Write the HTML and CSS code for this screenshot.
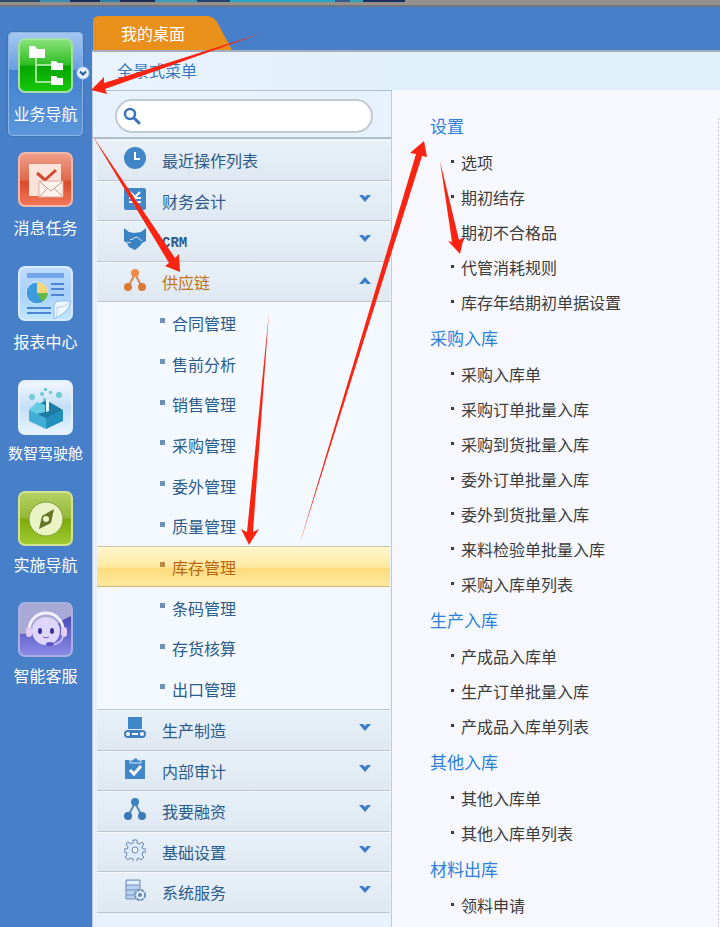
FILE: index.html
```html
<!DOCTYPE html>
<html lang="zh-CN">
<head>
	<meta charset="utf-8">
	<title>我的桌面</title>
	<link rel="stylesheet" href="styles.css">
</head>
<body>
<div class="top-strip"></div>
<div class="app">
  <nav class="sidebar">
    <button class="side-btn active">
      <svg class="side-icon" viewBox="0 0 55 55">
        <defs>
          <linearGradient id="green" x2="0" y2="1"><stop offset="0" stop-color="#8be37d"/><stop offset=".48" stop-color="#2fbd24"/><stop offset=".52" stop-color="#06a400"/><stop offset="1" stop-color="#18c80c"/></linearGradient>
        </defs>
        <rect x="1" y="1" width="53" height="53" rx="6" fill="url(#green)" stroke="#a5dfa5" stroke-width="2"/>
        <path d="M18 20v24h15M18 27h15" fill="none" stroke="#c8f3c0" stroke-width="1.500"/>
        <path d="M11 8h6l2 3h8v9H11zM33 23h5l2 2h5v7H33zM33 38h5l2 2h5v7H33z" fill="#fff"/>
      </svg>
      <span>业务导航</span>
      <svg class="side-more" viewBox="0 0 14 14"><circle cx="7" cy="7" r="6" fill="#e4f0fb" stroke="#b2cfee"/><path d="M4 5.500l3 3 3-3" fill="none" stroke="#245c9c" stroke-width="2"/></svg>
    </button>
    <button class="side-btn">
      <svg class="side-icon" viewBox="0 0 55 55">
        <defs>
          <linearGradient id="red" x2="0" y2="1"><stop offset="0" stop-color="#f0a08c"/><stop offset=".5" stop-color="#e0694c"/><stop offset=".55" stop-color="#d94a2a"/><stop offset="1" stop-color="#f2795a"/></linearGradient>
        </defs>
        <rect x="1" y="1" width="53" height="53" rx="6" fill="url(#red)" stroke="#efb8a8" stroke-width="2"/>
        <path d="M11 12h32v32H11z" fill="#fbe3dc"/>
        <path d="M19 21l8 7 11-10" fill="none" stroke="#cf4a31" stroke-width="3"/>
        <path d="M21 29h24v16H21z" fill="#fff3ee" stroke="#d9a99b"/>
        <path d="M22 30l11 9 11-9M22 44l8-8M44 44l-8-8" fill="none" stroke="#c99b8f"/>
      </svg>
      <span>消息任务</span>
    </button>
    <button class="side-btn">
      <svg class="side-icon" viewBox="0 0 55 55">
        <defs>
          <linearGradient id="sky" x2="0" y2="1"><stop offset="0" stop-color="#c0dcff"/><stop offset=".5" stop-color="#a9d0fb"/><stop offset="1" stop-color="#bfe8ff"/></linearGradient>
        </defs>
        <rect x="1" y="1" width="53" height="53" rx="6" fill="url(#sky)" stroke="#d9ebff" stroke-width="2"/>
        <path d="M9 7h37v5H9z" fill="#76a6ea"/>
        <path d="M33 18h13M33 23h13M33 29h13M9 42h24M9 47h24" stroke="#4c86d4" stroke-width="2"/>
        <circle cx="19" cy="27" r="11" fill="#3c9add" stroke="#d9f0ff"/>
        <path d="M19 27V16a11 11 0 0 1 11 11z" fill="#f6d77c"/>
        <path d="M19 27h11a11 11 0 0 1-6 9z" fill="#65b94c"/>
        <path d="M36 53V39q1-4 5-4h12q-1 7-6 11-5 4-11 7z" fill="#eef6ff" stroke="#8dbbea"/>
        <path d="M38 52q2-7 1-11 7 1 13-5" fill="none" stroke="#b3d2f3"/>
      </svg>
      <span>报表中心</span>
    </button>
    <button class="side-btn dense small">
      <svg class="side-icon" viewBox="0 0 55 55">
        <defs>
          <linearGradient id="pale" x2="0" y2="1"><stop offset="0" stop-color="#f2f7ff"/><stop offset=".5" stop-color="#c4def8"/><stop offset="1" stop-color="#e8f5ff"/></linearGradient>
        </defs>
        <rect x="1" y="1" width="53" height="53" rx="6" fill="url(#pale)" stroke="#e4f0fd" stroke-width="2"/>
        <path d="M11 30l17-10 17 10-17 9z" fill="#1d7ca6"/>
        <path d="M11 30l17 8v11l-17-8z" fill="#3fadd6"/>
        <path d="M45 30l-17 8v11l17-8z" fill="#238fbd"/>
        <path d="M11 30l8-8 8 3v7l-8 2z" fill="#67cbe2"/>
        <path d="M28 20h3v11l-3 1z" fill="#e2f8fa"/>
        <g fill="#70cbd2"><circle cx="14" cy="17" r="3"/><circle cx="41" cy="15" r="3"/><circle cx="24" cy="14" r="2"/><path d="M26 8h3v3h-3zM31 11h3v3h-3zM25 18h3v3h-3z"/></g>
      </svg>
      <span>数智驾驶舱</span>
    </button>
    <button class="side-btn dense">
      <svg class="side-icon" viewBox="0 0 55 55">
        <defs>
          <linearGradient id="lime" x2="0" y2="1"><stop offset="0" stop-color="#b7d065"/><stop offset=".48" stop-color="#93b936"/><stop offset=".52" stop-color="#7daa0c"/><stop offset="1" stop-color="#a2cb33"/></linearGradient>
        </defs>
        <rect x="1" y="1" width="53" height="53" rx="6" fill="url(#lime)" stroke="#cfe393" stroke-width="2"/>
        <circle cx="28" cy="28" r="17" fill="#eaf3c4" stroke="#7f9a34"/>
        <path d="M36 18l-3 14-12 6 3-13z" fill="#667527"/>
        <circle cx="28" cy="28" r="3" fill="#eaf3c4"/>
      </svg>
      <span>实施导航</span>
    </button>
    <button class="side-btn dense">
      <svg class="side-icon" viewBox="0 0 55 55">
        <defs>
          <linearGradient id="violet" x2="0" y2="1"><stop offset="0" stop-color="#3434a4"/><stop offset="1" stop-color="#8b8be8"/></linearGradient>
        </defs>
        <rect x="1" y="1" width="53" height="53" rx="6" fill="url(#violet)"/>
        <path d="M1 32V7q0-6 6-6h41q6 0 6 6v7C39 18 39 31 1 32z" fill="#a9a9d6"/>
        <rect x="1" y="1" width="53" height="53" rx="6" fill="none" stroke="#a9afe2" stroke-width="2"/>
        <circle cx="28" cy="29" r="14" fill="#ded6fb"/>
        <path d="M11 28a17 17 0 0 1 34 0" fill="none" stroke="#f3efff" stroke-width="3"/>
        <rect x="8" y="25" width="6" height="10" rx="3" fill="#e3cdf5"/><rect x="43" y="25" width="6" height="10" rx="3" fill="#e3cdf5"/>
        <path d="M45 35q-2 7-12 8" fill="none" stroke="#c9bdf6" stroke-width="2"/>
        <ellipse cx="32" cy="42" rx="4" ry="2" fill="#5d54c4"/>
        <ellipse cx="22" cy="29" rx="2" ry="3" fill="#3a2f9a"/><ellipse cx="34" cy="29" rx="2" ry="3" fill="#3a2f9a"/>
        <path d="M25 35q3 2 6 0" fill="none" stroke="#6d5fc4"/>
      </svg>
      <span>智能客服</span>
    </button>
  </nav>

  <main class="main">
    <div class="tabs"><button class="tab">我的桌面</button></div>
    <div class="crumb">全景式菜单</div>
    <div class="content">
      <section class="menu-panel">
        <label class="search">
          <svg viewBox="0 0 18 18"><circle cx="7" cy="7" r="5" fill="none" stroke="#3c74bb" stroke-width="2.500"/><path d="M11 11l5 5" stroke="#3c74bb" stroke-width="3" stroke-linecap="round"/></svg>
          <input type="text" aria-label="搜索">
        </label>
        <ul class="menu">
          <li>
            <button class="menu-head">
              <svg class="menu-icon" viewBox="0 0 22 22"><circle cx="11" cy="11" r="11" fill="#3f87c8"/><path d="M11 5v7h5" fill="none" stroke="#fff" stroke-width="2"/></svg>
              <span>最近操作列表</span>
            </button>
          </li>
          <li>
            <button class="menu-head">
              <svg class="menu-icon" viewBox="0 0 22 22"><rect width="22" height="22" rx="2" fill="#3f87c8"/><path d="M6 4l5 5 5-5M5 10h12M5 14h12M11 9v9" fill="none" stroke="#fff" stroke-width="2"/></svg>
              <span>财务会计</span>
              <svg class="chevron" viewBox="0 0 12 8"><path d="M0 0h4l2 2 2-2h4L6 7z"/></svg>
            </button>
          </li>
          <li>
            <button class="menu-head">
              <svg class="menu-icon" viewBox="0 0 22 22"><path d="M0 0l5 4 5 1 7-1 5-4v13l-4 2-2 3-5 4-6-3-2-4-3-2z" fill="#3a82c4"/><path d="M6 11q2 2 4-1l3-1 5 4M3 14l4 1" fill="none" stroke="#dcebf8"/></svg>
              <span class="latin">CRM</span>
              <svg class="chevron" viewBox="0 0 12 8"><path d="M0 0h4l2 2 2-2h4L6 7z"/></svg>
            </button>
          </li>
          <li>
            <button class="menu-head open">
              <svg class="menu-icon" viewBox="0 0 22 22"><path d="M11 5L4 18M11 5l7 13" stroke="#d58a55" stroke-width="2"/><circle cx="11" cy="4" r="4" fill="#f08c48"/><circle cx="4" cy="18" r="4" fill="#d87a35"/><circle cx="18" cy="18" r="4" fill="#d87a35"/></svg>
              <span>供应链</span>
              <svg class="chevron" viewBox="0 0 12 8"><path d="M6 1l6 7H8L6 6 4 8H0z"/></svg>
            </button>
            <ul class="submenu">
              <li><a href="#">合同管理</a></li>
              <li><a href="#">售前分析</a></li>
              <li><a href="#">销售管理</a></li>
              <li><a href="#">采购管理</a></li>
              <li><a href="#">委外管理</a></li>
              <li><a href="#">质量管理</a></li>
              <li class="current"><a href="#">库存管理</a></li>
              <li><a href="#">条码管理</a></li>
              <li><a href="#">存货核算</a></li>
              <li><a href="#">出口管理</a></li>
            </ul>
          </li>
          <li>
            <button class="menu-head">
              <svg class="menu-icon" viewBox="0 0 22 22"><path d="M4 0h14v12H4z" fill="#3f87c8"/><rect y="13" width="22" height="8" rx="4" fill="#3f7fbd"/><path d="M8 17h6" stroke="#fff" stroke-width="2"/><circle cx="4" cy="17" r="2" fill="#fff"/><circle cx="18" cy="17" r="2" fill="#fff"/></svg>
              <span>生产制造</span>
              <svg class="chevron" viewBox="0 0 12 8"><path d="M0 0h4l2 2 2-2h4L6 7z"/></svg>
            </button>
          </li>
          <li>
            <button class="menu-head">
              <svg class="menu-icon" viewBox="0 0 22 22"><path d="M1 2h20v19H1z" fill="#3f87c8"/><path d="M6 5V2h3l1-2h3l1 2h3v3z" fill="#3f87c8" stroke="#dcebf8"/><path d="M6 12l4 4 7-8" fill="none" stroke="#fff" stroke-width="3"/></svg>
              <span>内部审计</span>
              <svg class="chevron" viewBox="0 0 12 8"><path d="M0 0h4l2 2 2-2h4L6 7z"/></svg>
            </button>
          </li>
          <li>
            <button class="menu-head">
              <svg class="menu-icon" viewBox="0 0 22 22"><path d="M11 5L4 18M11 5l7 13" stroke="#5988b6" stroke-width="2"/><circle cx="11" cy="4" r="4" fill="#3a82c4"/><circle cx="4" cy="18" r="4" fill="#3a78b6"/><circle cx="18" cy="18" r="4" fill="#3a78b6"/></svg>
              <span>我要融资</span>
              <svg class="chevron" viewBox="0 0 12 8"><path d="M0 0h4l2 2 2-2h4L6 7z"/></svg>
            </button>
          </li>
          <li>
            <button class="menu-head">
              <svg class="menu-icon" viewBox="0 0 22 22"><path d="M9 1h4l0 3 2 1 3-2 2 2-2 3 1 2h3v3l-3 0-1 3 2 2-3 3-2-2-2 1v3H9v-3l-3-1-2 2-3-3 2-2-1-3H0v-3h3l1-2-2-3 2-2 3 2 2-1z" fill="#dceafa" stroke="#6287b3"/><circle cx="11" cy="11" r="3" fill="#f4f9fe" stroke="#6287b3"/></svg>
              <span>基础设置</span>
              <svg class="chevron" viewBox="0 0 12 8"><path d="M0 0h4l2 2 2-2h4L6 7z"/></svg>
            </button>
          </li>
          <li>
            <button class="menu-head">
              <svg class="menu-icon" viewBox="0 0 22 22"><path d="M2 1h14v19H2z" fill="#b5d0f2" stroke="#6e8fb6"/><path d="M3 2h12v4H3z" fill="#e6f0fb"/><path d="M2 6h14M2 11h14M2 16h14" stroke="#6e8fb6"/><circle cx="16" cy="16" r="5" fill="#e4effb" stroke="#6e8fb6" stroke-width="2" stroke-dasharray="3 1"/><circle cx="16" cy="16" r="2" fill="#5f85b4"/></svg>
              <span>系统服务</span>
              <svg class="chevron" viewBox="0 0 12 8"><path d="M0 0h4l2 2 2-2h4L6 7z"/></svg>
            </button>
          </li>
        </ul>
      </section>

      <section class="links">
        <h2>设置</h2>
        <ul>
          <li><a href="#">选项</a></li>
          <li><a href="#">期初结存</a></li>
          <li><a href="#">期初不合格品</a></li>
          <li><a href="#">代管消耗规则</a></li>
          <li><a href="#">库存年结期初单据设置</a></li>
        </ul>
        <h2>采购入库</h2>
        <ul>
          <li><a href="#">采购入库单</a></li>
          <li><a href="#">采购订单批量入库</a></li>
          <li><a href="#">采购到货批量入库</a></li>
          <li><a href="#">委外订单批量入库</a></li>
          <li><a href="#">委外到货批量入库</a></li>
          <li><a href="#">来料检验单批量入库</a></li>
          <li><a href="#">采购入库单列表</a></li>
        </ul>
        <h2>生产入库</h2>
        <ul>
          <li><a href="#">产成品入库单</a></li>
          <li><a href="#">生产订单批量入库</a></li>
          <li><a href="#">产成品入库单列表</a></li>
        </ul>
        <h2>其他入库</h2>
        <ul>
          <li><a href="#">其他入库单</a></li>
          <li><a href="#">其他入库单列表</a></li>
        </ul>
        <h2>材料出库</h2>
        <ul>
          <li><a href="#">领料申请</a></li>
        </ul>
      </section>
    </div>
  </main>
</div>

<!-- red guide arrows over the page -->
<svg class="arrows" width="720" height="927" viewBox="0 0 720 927">
  <path d="M262 33L104 83V77L91 90l16 4-2-5z"/>
  <path d="M92 135l77 128-4 3 15 6-1-18-4 4z"/>
  <path d="M269 312l-22 220-6-3 8 16 10-16-6 3z"/>
  <path d="M299 546L416 154l-6-1 14-12 3 16-5-1z"/>
  <path d="M440 161l12 81-4-1 12 13 4-17-5 3z"/>
</svg>
</body>
</html>
```
FILE: styles.css
```css
* {
  box-sizing: border-box;
}

body {
  margin: 0;
  position: relative;
  min-height: 100vh;
  display: flex;
  flex-direction: column;
  overflow-x: hidden;
  background-color: #4780c8;
  font-family: "Noto Sans CJK SC", sans-serif;
  font-size: 16px;
}

button, input {
  font: inherit;
  border: 0;
  padding: 0;
  background: none;
}

ul {
  list-style: none;
  margin: 0;
  padding: 0;
}

a {
  color: inherit;
  text-decoration: none;
}

.top-strip {
  height: 7px;
  border-bottom: 2px solid #6f7782;
  background:
    linear-gradient(90deg, #2b4a63 0 40px, #3d8fae 40px 70px, #1b2c55 70px 100px, #2f7fa0 100px 120px, #1d2b50 120px 155px, #3aa0bc 155px 197px, #24406e 197px 230px, #2aa4c4 230px 335px, #375a86 335px 350px, #2fa2bd 350px 363px, #1a2f60 363px 405px, transparent 405px) 0 0 / 100% 2px no-repeat,
    #96908c;
}

.app {
  flex: 1;
  display: flex;
}

/* left bar */
.sidebar {
  width: 92px;
  flex: none;
  padding: 25px 9px 0 8px;
  display: flex;
  flex-direction: column;
  gap: 10px;
}

.side-btn {
  position: relative;
  height: 104px;
  padding-top: 6px;
  display: flex;
  flex-direction: column;
  align-items: center;
  gap: 8px;
  color: #fff;
  line-height: 24px;
  white-space: nowrap;
}

.side-btn.active {
  border-radius: 5px;
  background: linear-gradient(#a5c8f1, #6a9fdf 36%, #4181d0 37%, #5c96db);
  box-shadow: inset 0 0 0 1px #8cb5e6, 0 0 2px #2c5e9e;
}

.side-btn.dense {
  height: 101px;
  gap: 6px;
}

.side-btn.small {
  font-size: 15px;
}

.side-icon {
  width: 55px;
  height: 55px;
  flex: none;
}

.side-more {
  position: absolute;
  right: -7px;
  top: 34px;
  width: 14px;
  height: 14px;
}

/* right side */
.main {
  flex: 1;
  min-width: 0;
  display: flex;
  flex-direction: column;
}

.tabs {
  height: 45px;
  padding-top: 9px;
  border-bottom: 2px solid #a3adbd;
}

.tab {
  width: 140px;
  height: 34px;
  padding-left: 29px;
  text-align: left;
  color: #fff;
  background-color: #e8901a;
  clip-path: path("M1 34V6Q1 0 7 0H115Q121 0 125 6L140 34Z");
}

.crumb {
  height: 38px;
  padding-left: 24px;
  line-height: 37px;
  color: #3a78bd;
  background: linear-gradient(90deg, #ebf3fd, #e0f0fa 50%);
  border-left: 1px solid #dfe6ef;
}

.content {
  flex: 1;
  display: flex;
  background-color: #f6f8fd;
}

.menu-panel {
  width: 300px;
  flex: none;
  padding-left: 4px;
  background-color: #e8f2fc;
  border-top: 1px solid #b3bfce;
  border-left: 1px solid #b9c6d6;
  border-right: 1px solid #c3cbd6;
}

.search {
  display: flex;
  align-items: center;
  gap: 8px;
  height: 34px;
  margin: 8px 18px 4px;
  padding: 0 6px;
  border: 2px solid #c2cad8;
  border-radius: 17px;
  background-color: #fff;
}

.search svg {
  width: 18px;
  height: 18px;
  flex: none;
}

.search input {
  flex: 1;
  min-width: 0;
  outline: none;
}

.menu {
  border-top: 2px solid #b3bcc9;
  margin-left: -3px;
  padding: 1px 1px 0 3px;
}

.menu-head {
  width: 100%;
  height: 40px;
  padding: 0 19px 0 27px;
  display: flex;
  align-items: center;
  gap: 16px;
  color: #2a5c8c;
  text-align: left;
  background: linear-gradient(#e8f0f8, #dfe8f1);
  border-bottom: 1px solid #bcc6d1;
  box-shadow: inset 0 1px #f4f8fc;
}

.menu > li:nth-child(odd) > .menu-head {
  height: 41px;
}

.menu-head.open {
  color: #bf7418;
}

.menu-icon {
  width: 22px;
  height: 22px;
  margin-bottom: 4px;
}

.menu-head .latin {
  padding-top: 4px;
  font-family: "Liberation Mono", monospace;
  font-size: 14px;
  font-weight: bold;
}

.chevron {
  width: 12px;
  height: 8px;
  margin-left: auto;
  margin-bottom: 4px;
  fill: #3a7cc9;
}

.submenu {
  background-color: #f4f9ff;
  border-bottom: 1px solid #bcc6d1;
}

.submenu li {
  display: flex;
  align-items: center;
  gap: 7px;
  height: 41px;
  padding-left: 63px;
  color: #2a5c8c;
}

.submenu li:nth-child(3n) {
  height: 40px;
}

.submenu li::before {
  content: "";
  width: 5px;
  height: 5px;
  margin-bottom: 4px;
  background-color: #6f91b5;
}

.submenu .current {
  color: #b8660f;
  background: linear-gradient(#fff6cf, #ffeaa4 50%, #fddc7e 55%, #ffe99f);
  border-top: 1px solid #c9c3a6;
  border-bottom: 1px solid #d9b56c;
}

.submenu .current::before {
  background-color: #b98a45;
}

.links {
  flex: 1;
  margin-right: 1px;
  padding: 17px 0 0 38px;
  background: repeating-linear-gradient(#c3c7cd 0 2px, transparent 2px 4px) 100% 28px / 1px 100% no-repeat;
}

.links h2 {
  margin: 0;
  font-size: 17px;
  font-weight: normal;
  line-height: 37px;
  color: #2c80dc;
}

.links li {
  display: flex;
  align-items: center;
  gap: 7px;
  height: 35px;
  padding-left: 21px;
  color: #3c3c3c;
}

.links li::before {
  content: "";
  width: 3px;
  height: 3px;
  background-color: #3c3c3c;
}

.arrows {
  position: absolute;
  left: 0;
  top: 0;
  pointer-events: none;
  fill: #fb2413;
}
```
